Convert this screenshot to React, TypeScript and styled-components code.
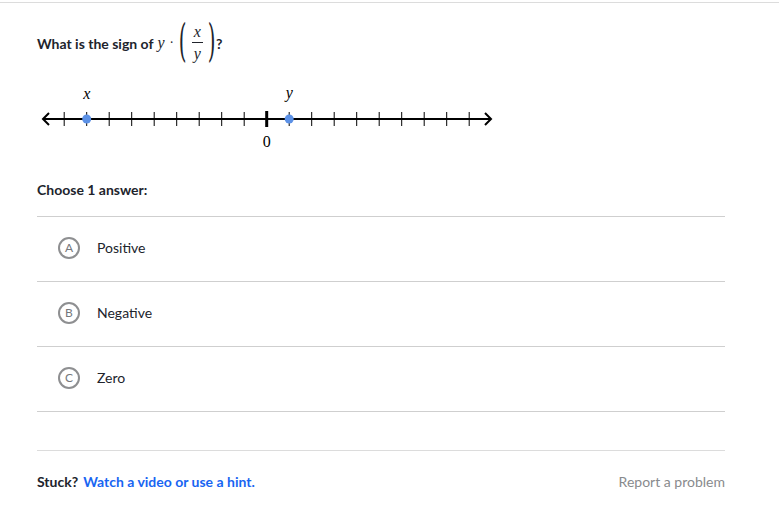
import React from 'react';
import styled, { createGlobalStyle } from 'styled-components';

const GlobalStyle = createGlobalStyle`
  body {
    margin: 0;
    background: #fff;
    font-family: Lato, "Noto Sans", sans-serif;
    color: #21242c;
  }
`;

const Page = styled.div`
  border-top: 1px solid #dcdcdc;
  margin-top: 2px;
`;

const Content = styled.div`
  width: 688px;
  padding-left: 37px;
`;

const Question = styled.div`
  display: flex;
  align-items: center;
  height: 40px;
  margin-top: 20px;
  font-size: 14px;
  font-weight: 700;
`;

const MathVar = styled.span`
  font-family: "Liberation Serif", "DejaVu Serif", serif;
  font-style: italic;
  font-weight: 400;
  font-size: 16px;
  margin-left: 4px;
`;

const Dot = styled.span`
  font-family: "DejaVu Serif", serif;
  font-weight: 400;
  margin: 0 5px;
  font-size: 12px;
`;

const Paren = styled.span`
  font-family: "DejaVu Serif", serif;
  font-weight: 300;
  font-size: 44px;
  line-height: 1;
  transform: scaleX(0.45);
  margin: -4px -4px 0;
`;

const Frac = styled.span`
  display: inline-flex;
  flex-direction: column;
  align-items: center;
  padding: 0 4px;
`;

const FracPart = styled.span`
  font-family: "Liberation Serif", "DejaVu Serif", serif;
  font-style: italic;
  font-weight: 400;
  font-size: 16px;
  line-height: 14px;
  padding: 0 2px;
`;

const FracBar = styled.span`
  width: 100%;
  height: 1px;
  margin: 3px 0 4px;
  background: #21242c;
`;

const LineWrap = styled.div`
  margin-top: 15px;
  margin-left: -37px;
`;

const Prompt = styled.div`
  font-size: 14px;
  font-weight: 700;
  margin-top: 19px;
  line-height: 20px;
  padding-bottom: 16px;
  border-bottom: 1px solid #cfcfcf;
`;

const Option = styled.div`
  display: flex;
  align-items: center;
  box-sizing: border-box;
  height: 65px;
  padding: 0 0 3px 21px;
  border-bottom: 1px solid #cfcfcf;
  font-size: 14px;
`;

const Letter = styled.span`
  width: 18px;
  height: 18px;
  border: 2px solid #8e8f91;
  border-radius: 50%;
  display: flex;
  align-items: center;
  justify-content: center;
  font-size: 12px;
  color: #75777b;
  margin-right: 17px;
`;

const Spacer = styled.div`
  height: 38px;
  border-bottom: 1px solid #dcdcdc;
`;

const Footer = styled.div`
  display: flex;
  justify-content: space-between;
  align-items: center;
  height: 61px;
  font-size: 14px;
`;

const Stuck = styled.span`
  font-weight: 700;
`;

const Link = styled.a`
  color: #1865f2;
  font-weight: 700;
  text-decoration: none;
  margin-left: 5px;
`;

const Report = styled.span`
  color: #888a8d;
`;

const NumberLine = () => {
  const zero = 266.7;
  const step = 22.5;
  const y = 121;
  const ticks = [];
  for (let i = -9; i <= 9; i++) ticks.push(i);
  return (
    <svg width="520" height="80" viewBox="0 80 520 80">
      <line x1="44" y1={y} x2="490" y2={y} stroke="#000" strokeWidth="2" />
      <path d="M49 115 L43 121 L49 127" fill="none" stroke="#000" strokeWidth="2" />
      <path d="M485 115 L491 121 L485 127" fill="none" stroke="#000" strokeWidth="2" />
      {ticks.map(i =>
        i === 0 ? (
          <line key={i} x1={zero} y1={113} x2={zero} y2={129} stroke="#000" strokeWidth="3" />
        ) : (
          <line key={i} x1={zero + i * step} y1={114} x2={zero + i * step} y2={128} stroke="#000" strokeWidth="1" />
        )
      )}
      <circle cx={zero - 8 * step} cy={y} r="4.5" fill="#5c91e6" />
      <circle cx={zero + step} cy={y} r="4.5" fill="#5c91e6" />
      <text x={zero - 8 * step} y="101" textAnchor="middle" fontFamily="Liberation Serif, serif" fontStyle="italic" fontSize="16">x</text>
      <text x={zero + step} y="100" textAnchor="middle" fontFamily="Liberation Serif, serif" fontStyle="italic" fontSize="16">y</text>
      <text x={zero} y="149" textAnchor="middle" fontFamily="Liberation Serif, serif" fontSize="16">0</text>
    </svg>
  );
};

export default function App() {
  return (
    <Page>
      <GlobalStyle />
      <Content>
        <Question>
          What is the sign of <MathVar>y</MathVar>
          <Dot>·</Dot>
          <Paren>(</Paren>
          <Frac>
            <FracPart>x</FracPart>
            <FracBar />
            <FracPart>y</FracPart>
          </Frac>
          <Paren>)</Paren>
          ?
        </Question>
        <LineWrap>
          <NumberLine />
        </LineWrap>
        <Prompt>Choose 1 answer:</Prompt>
        {['Positive', 'Negative', 'Zero'].map((label, i) => (
          <Option key={label}>
            <Letter>{'ABC'[i]}</Letter>
            {label}
          </Option>
        ))}
        <Spacer />
        <Footer>
          <span>
            <Stuck>Stuck?</Stuck>
            <Link href="#">Watch a video or use a hint.</Link>
          </span>
          <Report>Report a problem</Report>
        </Footer>
      </Content>
    </Page>
  );
}
